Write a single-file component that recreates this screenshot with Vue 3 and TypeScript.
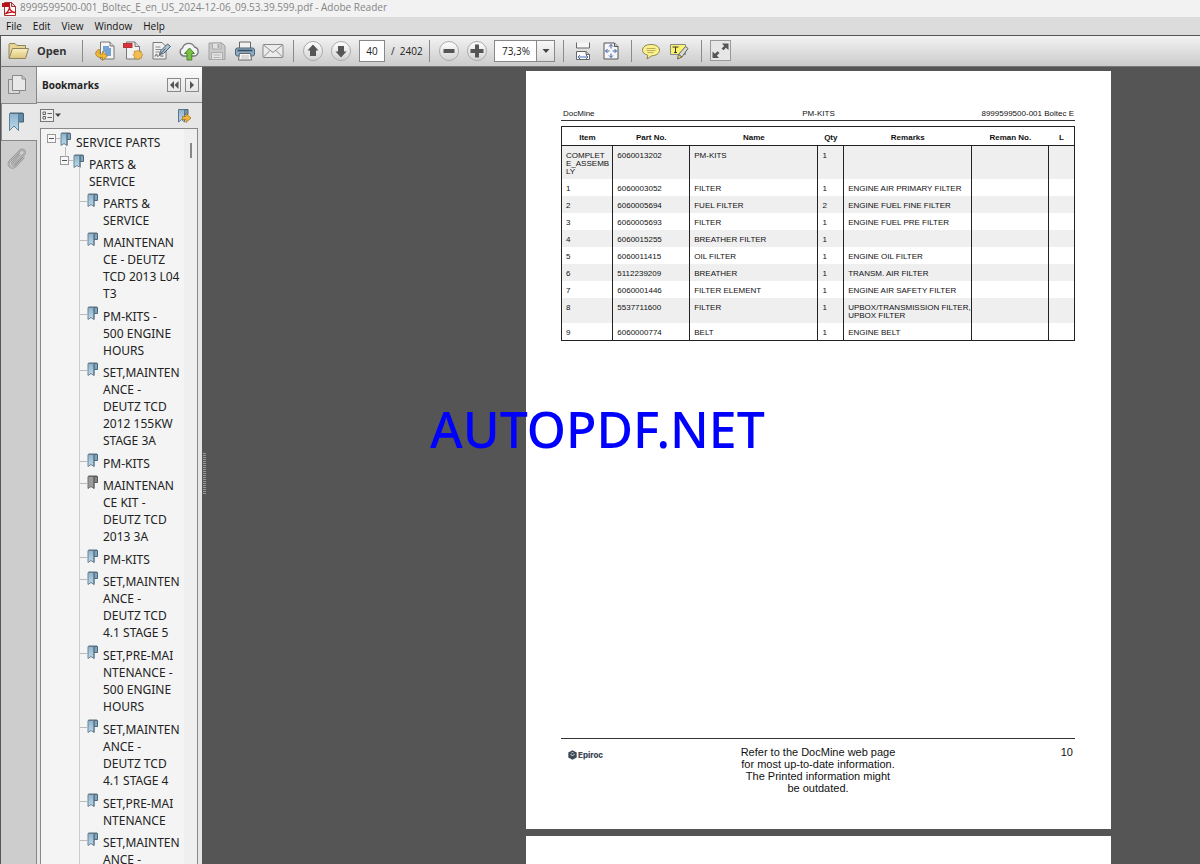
<script setup lang="ts">
import { ref } from 'vue'

interface Bookmark {
  lines: string[]
  muted?: boolean
}

interface Part {
  item: string
  no: string
  name: string
  qty: number
  remarks: string
}

const menus = ['File', 'Edit', 'View', 'Window', 'Help']
const pageNumber = ref('40')
const zoomLevel = ref('73,3%')

const bookmarks: Bookmark[] = [
  { lines: ['PARTS &', 'SERVICE'] },
  { lines: ['MAINTENAN', 'CE - DEUTZ', 'TCD 2013 L04', 'T3'] },
  { lines: ['PM-KITS -', '500 ENGINE', 'HOURS'] },
  { lines: ['SET,MAINTEN', 'ANCE -', 'DEUTZ TCD', '2012 155KW', 'STAGE 3A'] },
  { lines: ['PM-KITS'] },
  { lines: ['MAINTENAN', 'CE KIT -', 'DEUTZ TCD', '2013 3A'], muted: true },
  { lines: ['PM-KITS'] },
  { lines: ['SET,MAINTEN', 'ANCE -', 'DEUTZ TCD', '4.1 STAGE 5'] },
  { lines: ['SET,PRE-MAI', 'NTENANCE -', '500 ENGINE', 'HOURS'] },
  { lines: ['SET,MAINTEN', 'ANCE -', 'DEUTZ TCD', '4.1 STAGE 4'] },
  { lines: ['SET,PRE-MAI', 'NTENANCE'] },
  { lines: ['SET,MAINTEN', 'ANCE -'] },
]

const columns = ['Item', 'Part No.', 'Name', 'Qty', 'Remarks', 'Reman No.', 'L']

const parts: Part[] = [
  { item: 'COMPLET\nE_ASSEMB\nLY', no: '6060013202', name: 'PM-KITS', qty: 1, remarks: '' },
  { item: '1', no: '6060003052', name: 'FILTER', qty: 1, remarks: 'ENGINE AIR PRIMARY FILTER' },
  { item: '2', no: '6060005694', name: 'FUEL FILTER', qty: 2, remarks: 'ENGINE FUEL FINE FILTER' },
  { item: '3', no: '6060005693', name: 'FILTER', qty: 1, remarks: 'ENGINE FUEL PRE FILTER' },
  { item: '4', no: '6060015255', name: 'BREATHER FILTER', qty: 1, remarks: '' },
  { item: '5', no: '6060011415', name: 'OIL FILTER', qty: 1, remarks: 'ENGINE OIL FILTER' },
  { item: '6', no: '5112239209', name: 'BREATHER', qty: 1, remarks: 'TRANSM. AIR FILTER' },
  { item: '7', no: '6060001446', name: 'FILTER ELEMENT', qty: 1, remarks: 'ENGINE AIR SAFETY FILTER' },
  { item: '8', no: '5537711600', name: 'FILTER', qty: 1, remarks: 'UPBOX/TRANSMISSION FILTER,\nUPBOX FILTER' },
  { item: '9', no: '6060000774', name: 'BELT', qty: 1, remarks: 'ENGINE BELT' },
]
</script>

<template>
  <div class="window">
    <svg class="defs" width="0" height="0" aria-hidden="true">
      <defs>
        <linearGradient id="blue" x1="0" y1="0" x2="0" y2="1">
          <stop offset="0" stop-color="#8fb3cc" /><stop offset="1" stop-color="#b9d9ec" />
        </linearGradient>
        <linearGradient id="folder" x1="0" y1="0" x2="0" y2="1">
          <stop offset="0" stop-color="#fbf0bd" /><stop offset="1" stop-color="#dcc57c" />
        </linearGradient>
        <linearGradient id="round" x1="0" y1="0" x2="0" y2="1">
          <stop offset="0" stop-color="#ffffff" /><stop offset="1" stop-color="#d2d2d2" />
        </linearGradient>
        <symbol id="mark" viewBox="0 0 11 15">
          <path d="M7 1.5h3.500v6H7z" fill="#7fa6c0" stroke="#4e6675" />
          <path d="M1 1.500h6v12L4 11.500 1 13.500z" fill="url(#blue)" stroke="#6d8494" />
          <path d="M7 1.500v12" stroke="#55707f" />
          <path d="M1.500 1h8.500" stroke="#5b7382" />
        </symbol>
        <symbol id="mark-muted" viewBox="0 0 11 15">
          <path d="M7 1.500h3.500v6H7z" fill="#858585" stroke="#555" />
          <path d="M1 1.500h6v12L4 11.500 1 13.500z" fill="#9b9b9b" stroke="#707070" />
          <path d="M7 1.500v12M1.500 1h8.500" stroke="#5c5c5c" />
        </symbol>
      </defs>
    </svg>

    <header class="titlebar">
      <svg width="16" height="16" viewBox="0 0 16 16" aria-hidden="true">
        <path d="M3.500 1.500h7l4 4v9h-11z" fill="#fff" stroke="#a33" />
        <path d="M10.500 1.500v4h4z" fill="#e6c8c8" stroke="#a33" />
        <rect x="1" y="2" width="8" height="4" fill="#b3131b" />
        <path d="M4 13c3-2 4.500-5 4.500-7.500C8.500 9 11 11 14 11.500 10 10.500 7 11.500 4 13z" fill="none" stroke="#c8161d" stroke-width="1.300" />
      </svg>
      <h1>8999599500-001_Boltec_E_en_US_2024-12-06_09.53.39.599.pdf - Adobe Reader</h1>
    </header>

    <nav class="menubar" aria-label="Main menu">
      <button v-for="m in menus" :key="m" type="button">{{ m }}</button>
    </nav>

    <div class="toolbar" role="toolbar" aria-label="Tools">
      <button type="button" class="open">
        <svg width="22" height="18" viewBox="0 0 22 18" aria-hidden="true">
          <path d="M1 16V2.500Q1 1.500 2 1.500h5l2 2h8.500V7" fill="#e8d592" stroke="#8d8464" />
          <path d="M1 16.500 4.500 6.500h16L17.500 16.500z" fill="url(#folder)" stroke="#8d8464" stroke-linejoin="round" />
        </svg>
        Open
      </button>
      <i class="sep"></i>
      <div class="group files">
        <button type="button" aria-label="Convert file">
          <svg width="22" height="22" viewBox="0 0 22 22">
            <path d="M6.500 2h9.500l4 4v13H6.500z" fill="#f4f4f4" stroke="#777" />
            <path d="M16 2v4h4" fill="#ddd" stroke="#777" />
            <path d="M9 7h6M9 9h8M9 11h8M11 13h6M12 15h5" stroke="#4a86c8" stroke-width="1.300" />
            <path d="M4.500 9.500C0 12 1 17.500 7 17.500h1.500V20.500l5-4.500-5-4.500v2.500H7.500C5 14 4 12 6.500 10z" fill="#efb73a" stroke="#a87718" stroke-width=".8" />
          </svg>
        </button>
        <button type="button" aria-label="Create PDF">
          <svg width="22" height="22" viewBox="0 0 22 22">
            <path d="M4.500 2H13l4.500 4.500V19h-13z" fill="#f2f2f2" stroke="#777" />
            <path d="M13 2v4.500h4.500" fill="#ddd" stroke="#777" />
            <rect x="1.500" y="3.500" width="8.500" height="4" fill="#d8323a" stroke="#b8323a" />
            <path d="m15.500 10 1.500 1.500 2-.5.200 2 1.600 1.500-1.300 1.500.1 2.100-2.100.1-1.500 1.500-1.500-1.400-2.100.1V16.200L11 14.700l1.400-1.500v-2.100l2 .2z" fill="#f3bd52" stroke="#b98a2c" stroke-width=".8" />
          </svg>
        </button>
        <button type="button" aria-label="Sign">
          <svg width="22" height="22" viewBox="0 0 22 22">
            <path d="M3 2.500h9l4 4V19H3z" fill="#f0f0f0" stroke="#777" />
            <path d="M5.500 7h5M5.500 9.500h6M5.500 12h4" stroke="#888" />
            <path d="M5 16.500c1-3 2-3 2-1s1.500 0 2.500 0 1 1 4 .5" fill="none" stroke="#555" />
            <path d="m9.500 14.500 1-3.500 7-7 3 2.500-7 7z" fill="#a9c2d6" stroke="#4b5b68" />
            <path d="m10 14.500 5.500-6" stroke="#4b5b68" />
          </svg>
        </button>
        <button type="button" aria-label="Upload">
          <svg width="22" height="22" viewBox="0 0 22 22">
            <path d="M5.500 16A4.300 4.300 0 0 1 4.500 8 6.500 6.500 0 0 1 16.500 7 4.700 4.700 0 0 1 17 16z" fill="#f4f4f4" stroke="#777" stroke-width="1.300" />
            <path d="m11.500 8 5 5.500h-2.700V20H9v-6.500H6.500z" fill="#7cc043" stroke="#47862a" />
          </svg>
        </button>
        <button type="button" aria-label="Save" disabled>
          <svg width="22" height="22" viewBox="0 0 22 22">
            <path d="M3 3h13l3 3v13.500H3z" fill="#cacaca" stroke="#a0a0a0" />
            <path d="M6.500 3h8.500v6H6.500zM5.500 12.500h11v7h-11z" fill="#e2e2e2" stroke="#aaa" />
            <path d="M12.500 4v4" stroke="#aaa" stroke-width="2" />
            <path d="M7.500 15h7M7.500 17.500h7" stroke="#b5b5b5" />
          </svg>
        </button>
        <button type="button" aria-label="Print">
          <svg width="22" height="22" viewBox="0 0 22 22">
            <path d="M5.500 2h11v7h-11z" fill="#f1f1f1" stroke="#666" />
            <rect x="1.500" y="8" width="19" height="8" rx="2" fill="#88abc7" stroke="#4d6477" />
            <path d="M3.500 10.500h15" stroke="#3c4c58" stroke-width="1.600" />
            <path d="M5.500 13.500h11l1 6.500H4.500z" fill="#f8f8f8" stroke="#666" />
            <path d="M7 16h8M7 18h8" stroke="#bbb" />
          </svg>
        </button>
        <button type="button" aria-label="Email">
          <svg width="22" height="22" viewBox="0 0 22 22">
            <rect x="1" y="4.500" width="20" height="13" rx="1" fill="#ececec" stroke="#888" />
            <path d="m1.500 5 9.500 7.500L20.500 5M1.500 17l6.500-6.500M20.500 17 14 10.500" fill="none" stroke="#8c8c8c" />
          </svg>
        </button>
      </div>
      <i class="sep"></i>
      <div class="group">
        <button type="button" aria-label="Previous page">
          <svg width="22" height="22" viewBox="0 0 22 22">
            <circle cx="11" cy="11" r="9.500" fill="url(#round)" stroke="#aaa" />
            <path d="m11 4.500 5.500 6H14V16H8v-5.500H5.500z" fill="#555" />
          </svg>
        </button>
        <button type="button" aria-label="Next page">
          <svg width="22" height="22" viewBox="0 0 22 22">
            <circle cx="11" cy="11" r="9.500" fill="url(#round)" stroke="#aaa" />
            <path d="m11 17.500 5.500-6H14V6H8v5.500H5.500z" fill="#555" />
          </svg>
        </button>
      </div>
      <input v-model="pageNumber" class="page-input" type="text" aria-label="Page number" />
      <span class="count">/&nbsp; 2402</span>
      <i class="sep"></i>
      <div class="group">
        <button type="button" aria-label="Zoom out">
          <svg width="22" height="22" viewBox="0 0 22 22">
            <circle cx="11" cy="11" r="9.500" fill="url(#round)" stroke="#aaa" />
            <path d="M5.500 9h11v4h-11z" fill="#555" />
          </svg>
        </button>
        <button type="button" aria-label="Zoom in">
          <svg width="22" height="22" viewBox="0 0 22 22">
            <circle cx="11" cy="11" r="9.500" fill="url(#round)" stroke="#aaa" />
            <path d="M9 4.500h4V9h4.500v4H13v4.500H9V13H4.500V9H9z" fill="#555" />
          </svg>
        </button>
      </div>
      <div class="zoom">
        <select v-model="zoomLevel" aria-label="Zoom level">
          <option>73,3%</option>
          <option>100%</option>
        </select>
        <span class="arrow"><svg width="8" height="4" viewBox="0 0 8 4"><path d="M.5 0h7L4 4z" fill="#444" /></svg></span>
      </div>
      <i class="sep wide"></i>
      <div class="group">
        <button type="button" aria-label="Fit width">
          <svg width="22" height="22" viewBox="0 0 22 22">
            <path d="M4.500 2.500V8h13V2.500" fill="#f6f6f6" stroke="#666" />
            <path d="M4.500 19.500v-8h9.500l3.500 3v5z" fill="#fafafa" stroke="#666" />
            <path d="M14 11.500v3h3.500" fill="#ccc" stroke="#666" />
            <path d="M6 17h10M8 15l-2 2 2 2M14 15l2 2-2 2" fill="none" stroke="#4d6fb5" />
          </svg>
        </button>
        <button type="button" aria-label="Fit page">
          <svg width="22" height="22" viewBox="0 0 22 22">
            <path d="M4 3h10.500l3.500 3.500V19H4z" fill="#f6f6f6" stroke="#555" />
            <path d="M14.500 3v3.500h3.500" fill="#ccc" stroke="#555" />
            <path d="M11 4.500v4M11 13.500v4M5.500 11h4M12.500 11h4M9 6.500l2-2 2 2M9 15.500l2 2 2-2M7.500 9l-2 2 2 2M14.500 9l2 2-2 2" fill="none" stroke="#3f63b0" />
          </svg>
        </button>
      </div>
      <i class="sep"></i>
      <div class="group">
        <button type="button" aria-label="Comment">
          <svg width="22" height="22" viewBox="0 0 22 22">
            <path d="M11 4.500c5 0 8.500 2.300 8.500 5.700 0 3.300-3.500 5.500-7.500 5.500L7 19l.8-3.800C4.500 14.400 2.500 12.600 2.500 10.200c0-3.400 3.500-5.700 8.500-5.700z" fill="#fbf08e" stroke="#8b8650" />
            <path d="M6.500 8.500h9M6.500 10.500h9M7.500 12.500h6" stroke="#b9ae5a" />
          </svg>
        </button>
        <button type="button" aria-label="Highlight text">
          <svg width="22" height="22" viewBox="0 0 22 22">
            <path d="M2.500 4.500h15v10h-15z" fill="#fbf36c" stroke="#888" />
            <path d="M4.500 7h6M7.500 7v5.500M6 12.500h3" stroke="#333" />
            <path d="m10.500 14.500 7-8 2.500 2-6 8.500z" fill="#d8d8d8" stroke="#666" />
            <path d="m10.500 14.500 3.500 2.500-4.500 2z" fill="#f7e93c" stroke="#666" />
          </svg>
        </button>
      </div>
      <i class="sep wide"></i>
      <button type="button" aria-label="Read mode">
        <svg width="22" height="22" viewBox="0 0 22 22">
          <rect x=".5" y=".5" width="20" height="20" fill="#e6e6e6" stroke="#999" />
          <path d="M12 3.500h6.500V10L16 7.800l-2.500 2.500L11.500 8.500 14.200 6zM9 18H2.500v-6.500L5 13.700l2.500-2.500 2 1.800-2.700 2.500z" fill="#555" />
        </svg>
      </button>
    </div>

    <div class="workspace">
      <nav class="strip" aria-label="Panels">
        <button type="button" aria-label="Page thumbnails">
          <svg width="20" height="22" viewBox="0 0 20 22">
            <path d="M1.500 5.500h11v14h-11z" fill="#d8d8d8" stroke="#888" />
            <path d="M5.500 1.500H15l3.500 3.500v11.500h-13z" fill="#e8e8e8" stroke="#888" stroke-linejoin="round" />
            <path d="M15 1.500v3.500h3.500" fill="none" stroke="#888" />
          </svg>
        </button>
        <button type="button" class="active" aria-label="Bookmarks" aria-pressed="true">
          <svg width="17" height="20" viewBox="0 0 17 20">
            <path d="M10 1.500h5.500v8.500H10z" fill="#5d8cac" stroke="#48606f" />
            <path d="M1.500 1.500h9v17L6 14l-4.500 4.500z" fill="url(#blue)" stroke="#5f7f95" />
            <path d="M2 1h13" stroke="#48606f" />
          </svg>
        </button>
        <button type="button" aria-label="Attachments">
          <svg width="20" height="22" viewBox="0 0 20 22">
            <path d="m13 6-7.500 8.500c-1 1.300.5 3 2 1.800L17 6.500c2.500-3-1-6.500-4-3.700L3 13c-3.500 4.200 1.200 9 5.500 5.200L17 9" fill="none" stroke="#909090" stroke-width="2" />
            <path d="m13 6-7.500 8.500c-1 1.300.5 3 2 1.800L17 6.500c2.500-3-1-6.500-4-3.700L3 13c-3.500 4.200 1.200 9 5.500 5.200L17 9" fill="none" stroke="#d0d0d0" stroke-width=".8" />
          </svg>
        </button>
      </nav>

      <aside class="panel">
        <div class="panel-head">
          <h2>Bookmarks</h2>
          <button type="button" aria-label="Collapse panel">
            <svg width="10" height="8" viewBox="0 0 10 8"><path d="M5 0v8L1 4zM9.500 0v8l-4-4z" fill="#555" /></svg>
          </button>
          <button type="button" aria-label="Expand panel">
            <svg width="10" height="8" viewBox="0 0 10 8"><path d="M3 0v8l4-4z" fill="#555" /></svg>
          </button>
        </div>
        <div class="panel-tools">
          <button type="button" aria-label="Options">
            <svg width="21" height="13" viewBox="0 0 21 13">
              <rect x=".5" y=".5" width="13" height="12" fill="#eee" stroke="#777" />
              <path d="M3 3h2.500v2.500H3zM3 7.500h2.500V10H3z" fill="none" stroke="#666" />
              <path d="M7.500 4.500H12M7.500 8.500H12" stroke="#666" />
              <path d="M15 4.500h6L18 8z" fill="#444" />
            </svg>
          </button>
          <button type="button" aria-label="Find current bookmark">
            <svg width="15" height="16" viewBox="0 0 15 16">
              <path d="M7 1.500h4v5H7z" fill="#6f95ae" stroke="#4e6675" />
              <path d="M1.500 1.500H7.500v12.500L4.500 11.500 1.500 14z" fill="url(#blue)" stroke="#5f7584" />
              <path d="M5.500 8.500h3.500V5.500l5 4.500-5 4.500v-3H5.500z" fill="#f2b53c" stroke="#a8771c" stroke-width=".8" />
            </svg>
          </button>
        </div>
        <div class="tree-box">
          <div class="tree">
            <div class="row root">
              <button type="button" class="toggle" aria-label="Collapse SERVICE PARTS"></button>
              <i class="dash"></i>
              <svg class="mark" width="11" height="15" aria-hidden="true"><use href="#mark" /></svg>
              <a href="#">SERVICE PARTS</a>
            </div>
            <div class="row branch">
              <button type="button" class="toggle" aria-label="Collapse PARTS &amp; SERVICE"></button>
              <i class="dash"></i>
              <svg class="mark" width="11" height="15" aria-hidden="true"><use href="#mark" /></svg>
              <a href="#"><span>PARTS &amp;</span><span>SERVICE</span></a>
            </div>
            <ul>
              <li v-for="(b, i) in bookmarks" :key="i" class="row" :class="{ long: b.lines.length > 3 }">
                <i class="dash"></i>
                <svg class="mark" width="11" height="15" aria-hidden="true">
                  <use :href="b.muted ? '#mark-muted' : '#mark'" />
                </svg>
                <a href="#"><span v-for="(l, k) in b.lines" :key="k">{{ l }}</span></a>
              </li>
            </ul>
          </div>
          <div class="scroll"><i></i></div>
        </div>
      </aside>

      <main class="viewer">
        <i class="grip"></i>
        <article class="page">
          <header class="page-head">
            <span>DocMine</span><span>PM-KITS</span><span>8999599500-001 Boltec E</span>
          </header>
          <table>
            <colgroup>
              <col class="c-item" /><col class="c-no" /><col class="c-name" /><col class="c-qty" />
              <col class="c-rem" /><col class="c-reman" /><col class="c-l" />
            </colgroup>
            <thead>
              <tr><th v-for="c in columns" :key="c" scope="col">{{ c }}</th></tr>
            </thead>
            <tbody>
              <tr v-for="p in parts" :key="p.no">
                <td>{{ p.item }}</td>
                <td>{{ p.no }}</td>
                <td>{{ p.name }}</td>
                <td>{{ p.qty }}</td>
                <td>{{ p.remarks }}</td>
                <td></td>
                <td></td>
              </tr>
            </tbody>
          </table>
          <footer class="page-foot">
            <span class="brand">
              <svg width="9" height="10" viewBox="0 0 9 10" aria-hidden="true">
                <path d="M4.500.3 8.700 2.600v4.800L4.500 9.700.3 7.400V2.600z" fill="#3d4a57" />
                <path d="M2.500 4.500 4.500 5.500l2-1M3.500 3l1-.5 1 .5" fill="none" stroke="#fff" stroke-width=".8" />
              </svg>
              Epiroc
            </span>
            <p>Refer to the DocMine web page<br />for most up-to-date information.<br />The Printed information might<br />be outdated.</p>
            <span class="folio">10</span>
          </footer>
        </article>
        <article class="page next"></article>
      </main>
    </div>

    <div class="watermark">AUTOPDF.NET</div>
  </div>
</template>

<style>
html,
body {
  margin: 0;
  overflow: hidden;
}
</style>

<style scoped>
.window {
  position: relative;
  display: flex;
  flex-direction: column;
  height: 100vh;
  overflow: hidden;
  font-family: "Open Sans", "Noto Sans", sans-serif;
  font-size: 10px;
  color: #222;
  background: #dcdcdc;
}
.defs {
  position: absolute;
}
button {
  display: flex;
  align-items: center;
  justify-content: center;
  margin: 0;
  padding: 0;
  border: 0;
  background: none;
  font: inherit;
  color: inherit;
}
svg {
  display: block;
  flex: none;
}
h1,
h2,
p,
ul {
  margin: 0;
  padding: 0;
  font: inherit;
  list-style: none;
}
a {
  color: inherit;
  text-decoration: none;
}
.titlebar {
  display: flex;
  flex: none;
  align-items: center;
  gap: 3px;
  height: 17px;
  padding-left: 1px;
  background: #f2f2f2;
  color: #858585;
}
.titlebar h1 {
  line-height: 15px;
  padding-bottom: 2px;
}
.menubar {
  display: flex;
  flex: none;
  gap: 11px;
  height: 18px;
  padding-left: 6px;
  background: #dcdcdc;
  color: #111;
}
.toolbar {
  display: flex;
  flex: none;
  align-items: center;
  box-sizing: border-box;
  height: 32px;
  padding: 0 0 1px 7px;
  border: solid #555;
  border-width: 1px 0 1px 1px;
  border-bottom-color: #777;
  background: linear-gradient(#f3f3f3, #cbcbcb);
}
.toolbar button {
  width: 28px;
  height: 28px;
}
.toolbar .open {
  justify-content: flex-start;
  gap: 7px;
  width: 68px;
  font-size: 11px;
  font-weight: 700;
  color: #333;
}
.group {
  display: flex;
}
.files {
  margin-left: 3px;
}
.sep {
  width: 1px;
  height: 22px;
  margin: 0 5px 0 6px;
  background: #8a8a8a;
}
.wide {
  margin-left: 8px;
}
.page-input {
  box-sizing: border-box;
  width: 26px;
  height: 22px;
  margin-left: 4px;
  padding: 0;
  border: 1px solid #888;
  background: #fff;
  font: inherit;
  color: #222;
  text-align: center;
}
.count {
  width: 32px;
  margin-left: 6px;
  white-space: nowrap;
}
.zoom {
  position: relative;
  width: 61px;
  height: 22px;
  margin-left: 3px;
}
.zoom select {
  box-sizing: border-box;
  width: 100%;
  height: 100%;
  padding: 0 0 0 7px;
  border: 1px solid #888;
  border-radius: 0;
  appearance: none;
  background: #fff;
  font: inherit;
  color: #222;
}
.arrow {
  position: absolute;
  top: 1px;
  right: 1px;
  bottom: 1px;
  display: flex;
  align-items: center;
  justify-content: center;
  width: 17px;
  border-left: 1px solid #888;
  background: linear-gradient(#f8f8f8, #dcdcdc);
  pointer-events: none;
}
.workspace {
  display: flex;
  flex: 1;
  min-height: 0;
  border-left: 1px solid #555;
}
.strip {
  flex: none;
  width: 36px;
  box-sizing: border-box;
  background: linear-gradient(#888, #888) right / 1px 100% no-repeat #cdcdcd;
}
.strip button {
  box-sizing: border-box;
  width: 100%;
  height: 36px;
  padding-right: 4px;
}
.strip .active {
  height: 38px;
  padding-right: 6px;
  border: solid #888;
  border-width: 1px 0 1px 1px;
  background: #e8e8e8;
}
.panel {
  display: flex;
  flex: none;
  flex-direction: column;
  width: 165px;
  background: #e6e6e6;
}
.panel-head {
  display: flex;
  flex: none;
  align-items: center;
  gap: 4px;
  height: 35px;
  padding: 0 3px 0 5px;
  border-bottom: 1px solid #8a8a8a;
  background: linear-gradient(#fff, #dcdcdc);
}
.panel-head h2 {
  flex: 1;
  font-size: 10px;
  font-weight: 700;
  color: #222;
}
.panel-head button {
  width: 14px;
  height: 14px;
  border: 1px solid #888;
  box-sizing: border-box;
}
.panel-tools {
  display: flex;
  flex: none;
  align-items: center;
  justify-content: space-between;
  height: 25px;
  padding: 0 10px 0 3px;
}
.tree-box {
  display: flex;
  flex: 1;
  min-height: 0;
  margin: 0 4px 0 3px;
  border: solid #888;
  border-width: 1px 1px 0;
  background: #f4f4f4;
  overflow: hidden;
}
.tree {
  flex: 1;
  padding-top: 5px;
  font-family: "Noto Sans", "Open Sans", sans-serif;
  font-size: 12px;
  line-height: 17px;
  color: #222;
}
.row {
  position: relative;
  display: flex;
  padding-bottom: 5px;
  white-space: nowrap;
}
.long {
  padding-bottom: 6px;
}
.root {
  padding-left: 6px;
}
.branch {
  padding-left: 19px;
}
.branch::before {
  content: "";
  position: absolute;
  top: -9px;
  left: 24px;
  width: 1px;
  height: 10px;
  background: #bbb;
}
.branch::after {
  content: "";
  position: absolute;
  top: 11px;
  bottom: 0;
  left: 38px;
  width: 1px;
  background: #ccc;
}
.row a {
  margin-left: 5px;
}
.row span {
  display: block;
}
.toggle {
  flex: none;
  width: 9px;
  height: 9px;
  border: 1px solid #999;
  background: linear-gradient(#555, #555) center / 5px 1px no-repeat #f8f8f8;
}
.dash {
  flex: none;
  width: 4px;
  height: 1px;
  margin-top: 4px;
  background: #bbb;
}
.mark {
  margin-top: -2px;
}
.tree ul {
  margin-left: 38px;
  border-left: 1px solid #ccc;
}
.tree li .dash {
  width: 7px;
  margin-top: 6px;
}
.scroll {
  flex: none;
  width: 13px;
  padding: 14px 0 0 6px;
  box-sizing: border-box;
  background: #efefef;
}
.scroll i {
  display: block;
  width: 2px;
  height: 15px;
  background: #888;
}
.viewer {
  position: relative;
  display: flex;
  flex: 1;
  flex-direction: column;
  gap: 7px;
  padding: 4px 89px 0 324px;
  background: #555;
  overflow: hidden;
}
.grip {
  position: absolute;
  top: 386px;
  left: 1px;
  width: 3px;
  height: 41px;
  background: repeating-linear-gradient(#999 0 1px, transparent 1px 2px);
}
.page {
  display: flex;
  flex: none;
  flex-direction: column;
  box-sizing: border-box;
  min-height: 758px;
  padding: 38px 36px 35px 35px;
  background: #fff;
  font-family: "Liberation Sans", Arial, sans-serif;
  font-size: 8px;
  line-height: 8px;
  color: #111;
}
.page-head {
  display: grid;
  grid-template-columns: 1fr auto 1fr;
  margin-bottom: 5px;
  padding: 1px 1px 2px 2px;
  border-bottom: 1px solid #333;
}
.page-head span:last-child {
  text-align: right;
}
table {
  width: 100%;
  table-layout: fixed;
  border-collapse: collapse;
  border: 1px solid #222;
}
.c-item {
  width: 10%;
}
.c-no {
  width: 15%;
}
.c-name {
  width: 25%;
}
.c-qty {
  width: 5%;
}
.c-rem {
  width: 25%;
}
.c-reman {
  width: 15%;
}
.c-l {
  width: 5%;
}
th {
  height: 19px;
  padding: 3px 0 0;
  border-bottom: 1px solid #222;
  box-sizing: border-box;
}
td {
  padding: 6px 0 3px 4px;
  border-left: 1px solid #222;
  vertical-align: top;
  white-space: pre-line;
}
tbody tr:nth-child(odd) {
  background: #efefef;
}
tbody tr:nth-child(2n) {
  background: #fff;
}
.page-foot {
  display: grid;
  grid-template-columns: 1fr auto 1fr;
  margin-top: auto;
  padding-top: 7px;
  border-top: 1px solid #333;
  font-size: 11px;
  line-height: 12px;
  text-align: center;
}
.brand {
  display: flex;
  gap: 1px;
  align-items: center;
  height: 18px;
  padding-left: 7px;
  font-family: Inter, sans-serif;
  font-size: 8px;
  font-weight: 800;
  color: #3d4a57;
}
.folio {
  padding-right: 2px;
  text-align: right;
}
.watermark {
  position: absolute;
  top: 394px;
  left: 430px;
  font-family: "Noto Sans", "Open Sans", sans-serif;
  font-size: 50px;
  font-weight: 500;
  line-height: 70px;
  color: #0000ff;
  pointer-events: none;
}
</style>
